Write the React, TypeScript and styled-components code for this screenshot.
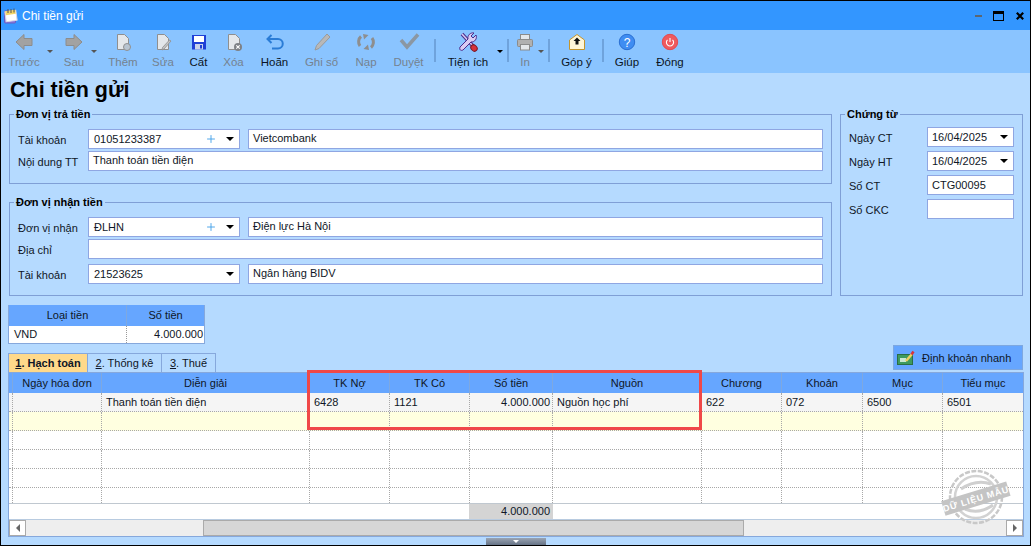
import React from "react";
import styled, { createGlobalStyle } from "styled-components";
import { Plus } from "lucide-react";

const GlobalStyle = createGlobalStyle`
  html, body {
    margin: 0;
    padding: 0;
    background: #b5daff;
  }
  * {
    box-sizing: border-box;
  }
`;

const ArrowLeftIcon = () => (
  <svg width="22" height="22" viewBox="0 0 22 22">
    <polygon points="3,11 11,3.5 11,7.5 19,7.5 19,14.5 11,14.5 11,18.5" fill="#a2a2a2" stroke="#8c8c8c" />
  </svg>
);
const ArrowRightIcon = () => (
  <svg width="22" height="22" viewBox="0 0 22 22">
    <polygon points="19,11 11,3.5 11,7.5 3,7.5 3,14.5 11,14.5 11,18.5" fill="#a2a2a2" stroke="#8c8c8c" />
  </svg>
);
const Doc = () => <path d="M5.5 3.5h7l4 4v11h-11z" fill="#e4e7ea" stroke="#8f8f8f" />;
const AddDocIcon = () => (
  <svg width="22" height="22" viewBox="0 0 22 22">
    <Doc />
    <circle cx="15" cy="16" r="3.5" fill="#b8c4d0" stroke="#8f8f8f" />
  </svg>
);
const EditDocIcon = () => (
  <svg width="22" height="22" viewBox="0 0 22 22">
    <Doc />
    <path d="M19 10l-7 8-2 1 .5-2.5 7-7.5z" fill="#c4c4c4" stroke="#8f8f8f" strokeWidth="0.8" />
  </svg>
);
const DeleteDocIcon = () => (
  <svg width="22" height="22" viewBox="0 0 22 22">
    <Doc />
    <circle cx="15" cy="16" r="4" fill="#7e8186" />
    <path d="M13.3 14.3l3.4 3.4M16.7 14.3l-3.4 3.4" stroke="#fff" strokeWidth="1.1" />
  </svg>
);
const SaveIcon = () => (
  <svg width="22" height="22" viewBox="0 0 22 22">
    <rect x="4" y="4" width="14" height="14.5" fill="#1f3fd6" />
    <rect x="6" y="5" width="10" height="6" fill="#fff" />
    <rect x="7" y="13" width="8" height="5.5" fill="#c9d3ea" />
    <rect x="12" y="14" width="2" height="3.5" fill="#1f3fd6" />
  </svg>
);
const UndoIcon = () => (
  <svg width="22" height="22" viewBox="0 0 22 22" fill="none" stroke="#2a7cd6" strokeWidth="2">
    <path d="M7.500 4L3.500 8l4 4" />
    <path d="M4 8h10a4.500 4.500 0 0 1 0 9.500H8" />
  </svg>
);
const PencilIcon = () => (
  <svg width="22" height="22" viewBox="0 0 22 22">
    <polygon points="16,3 19,6 8,17.500 4,19 5.500,14.500" fill="#b8b8b8" stroke="#9a9a9a" />
  </svg>
);
const ReloadIcon = () => (
  <svg width="22" height="22" viewBox="0 0 22 22" fill="none" stroke="#8e8e8e" strokeWidth="3">
    <path d="M5 15a7 7 0 0 1 1-9.500" />
    <path d="M17 7a7 7 0 0 1-1 9.500" />
    <polygon points="8,3 13.500,4 9,8.500" fill="#8e8e8e" stroke="none" />
    <polygon points="14,19 8.500,18 13,13.500" fill="#8e8e8e" stroke="none" />
  </svg>
);
const CheckIcon = () => (
  <svg width="22" height="22" viewBox="0 0 22 22" fill="none" stroke="#8b97a3" strokeWidth="3.500">
    <polyline points="3,9 9,16 20,3.500" />
  </svg>
);
const ToolsIcon = () => (
  <svg width="22" height="22" viewBox="0 0 22 22">
    <path d="M5 3l11 12" stroke="#4a2b8c" strokeWidth="3.500" />
    <path d="M5 3l11 12" stroke="#d9ccf2" strokeWidth="1.500" />
    <path d="M19 4l-3 3-2-2 3-3a5 5 0 0 0-6 6L3 16c-1 3 1 4 3 3l8-8a5 5 0 0 0 5-7z" fill="#d9ccf2" stroke="#4a2b8c" />
    <ellipse cx="17" cy="17" rx="3.500" ry="2.800" transform="rotate(45 17 17)" fill="#d8323a" stroke="#7a1a28" />
  </svg>
);
const PrinterIcon = () => (
  <svg width="22" height="22" viewBox="0 0 22 22" stroke="#8b8b8b">
    <rect x="6.500" y="3.500" width="9" height="5" fill="#e4e7ea" />
    <rect x="3.500" y="8.500" width="15" height="7" rx="1" fill="#b0b0b0" />
    <rect x="6.500" y="13.500" width="9" height="5.500" fill="#e4e7ea" />
  </svg>
);
const MailIcon = () => (
  <svg width="22" height="22" viewBox="0 0 22 22">
    <path d="M3.500 9L11 3.500 18.500 9v9.500h-15z" fill="#fff6d8" stroke="#c4952c" />
    <path d="M11 6.500l3.500 3.500h-2v3.500h-3V10h-2z" fill="#111" />
  </svg>
);
const HelpIcon = () => (
  <svg width="22" height="22" viewBox="0 0 22 22">
    <circle cx="11" cy="11" r="7.700" fill="#3f8df2" stroke="#2a6fd2" />
    <text x="11" y="15.500" textAnchor="middle" fontFamily="Liberation Sans" fontSize="12" fill="#fff">?</text>
  </svg>
);
const PowerIcon = () => (
  <svg width="22" height="22" viewBox="0 0 22 22">
    <circle cx="11" cy="11" r="7.700" fill="#ef5a5e" stroke="#e24a50" />
    <path d="M8.500 8.800a3.600 3.600 0 1 0 5 0M11 7v4" fill="none" stroke="#fff" strokeWidth="1.100" />
  </svg>
);

const NotepadIcon = () => (
  <svg width="16" height="16" viewBox="0 0 16 16">
    <rect x="1.500" y="3" width="11" height="12" rx="1" fill="#8f7fe0" stroke="#6a5cc0" />
    <rect x="2.500" y="3" width="11" height="10" fill="#fff" stroke="#d8d8e8" transform="rotate(-8 8 8)" />
    <rect x="3" y="2.500" width="10" height="4" fill="#f4d668" transform="rotate(-8 8 8)" />
    <path d="M5 1v4M8 1v4M11 0.500v4" stroke="#555" />
  </svg>
);

const StampIcon = () => (
  <svg width="18" height="16" viewBox="0 0 18 16">
    <rect x="0.500" y="4.500" width="15" height="10" fill="#3e9a5e" stroke="#2a6e42" />
    <rect x="3" y="8" width="6" height="4" fill="#c9e8d2" />
    <path d="M9 11l6-7" stroke="#f0d060" strokeWidth="2.500" />
    <path d="M14.500 4.500l2-3" stroke="#d8323a" strokeWidth="2.500" />
  </svg>
);

const tools = [
  { label: "Trước", w: 40, ml: 0, off: true, icon: <ArrowLeftIcon />, caret: -9 },
  { label: "Sau", w: 40, ml: 10, off: true, icon: <ArrowRightIcon />, caret: -3 },
  { label: "Thêm", w: 40, ml: 9, off: true, icon: <AddDocIcon /> },
  { label: "Sửa", w: 36, ml: 2, off: true, icon: <EditDocIcon /> },
  { label: "Cất", w: 35, ml: 0, icon: <SaveIcon /> },
  { label: "Xóa", w: 35, ml: 0, off: true, icon: <DeleteDocIcon /> },
  { label: "Hoãn", w: 47, ml: 0, icon: <UndoIcon /> },
  { label: "Ghi sổ", w: 47, ml: 0, off: true, icon: <PencilIcon /> },
  { label: "Nạp", w: 42, ml: 0, off: true, icon: <ReloadIcon /> },
  { label: "Duyệt", w: 43, ml: 0, off: true, icon: <CheckIcon /> },
  { sep: 4 },
  { label: "Tiện ích", w: 56, ml: 4, icon: <ToolsIcon />, caret: -7, dark: true },
  { sep: 11 },
  { label: "In", w: 30, ml: 1, off: true, icon: <PrinterIcon />, caret: -4 },
  { sep: 8 },
  { label: "Góp ý", w: 49, ml: 2, icon: <MailIcon /> },
  { sep: 1 },
  { label: "Giúp", w: 46, ml: 0, icon: <HelpIcon /> },
  { label: "Đóng", w: 40, ml: 0, icon: <PowerIcon /> },
];

const App = () => {
  return (
    <Window>
      <GlobalStyle />
      <TitleBar>
        <NotepadIcon />
        <TitleText>Chi tiền gửi</TitleText>
        <WinControls>
          <MinButton />
          <MaxButton />
          <CloseButton>
            <svg width="8" height="8" viewBox="0 0 8 8">
              <path d="M.8.800l6.400 6.400M7.200.800L.8 7.200" stroke="#000" strokeWidth="2.200" />
            </svg>
          </CloseButton>
        </WinControls>
      </TitleBar>

      <Toolbar>
        {tools.map((t, i) =>
          t.sep !== undefined ? (
            <ToolSep key={i} $ml={t.sep} />
          ) : (
            <ToolButton key={i} $w={t.w!} $ml={t.ml!} $off={!!t.off}>
              {t.icon}
              <ToolLabel>{t.label}</ToolLabel>
              {t.caret !== undefined && <ToolCaret $right={t.caret} $dark={!!t.dark} />}
            </ToolButton>
          )
        )}
      </Toolbar>

      <Body>
        <Heading>Chi tiền gửi</Heading>
        <FormArea>
          <LeftColumn>
            <Group>
              <GroupTitle>Đơn vị trả tiền</GroupTitle>
              <FormRow>
                <FieldLabel>Tài khoản</FieldLabel>
                <Combo value="01051233387" plus />
                <Field>Vietcombank</Field>
              </FormRow>
              <FormRow $top={2}>
                <FieldLabel>Nội dung TT</FieldLabel>
                <Field>Thanh toán tiền điện</Field>
              </FormRow>
            </Group>
            <Group $bottom={11}>
              <GroupTitle>Đơn vị nhận tiền</GroupTitle>
              <FormRow>
                <FieldLabel>Đơn vị nhận</FieldLabel>
                <Combo value="ĐLHN" plus />
                <Field>Điện lực Hà Nội</Field>
              </FormRow>
              <FormRow $top={2}>
                <FieldLabel>Địa chỉ</FieldLabel>
                <Field />
              </FormRow>
              <FormRow $top={5}>
                <FieldLabel>Tài khoản</FieldLabel>
                <Combo value="21523625" />
                <Field>Ngân hàng BIDV</Field>
              </FormRow>
            </Group>
          </LeftColumn>
          <VoucherGroup>
            <GroupTitle>Chứng từ</GroupTitle>
            <VoucherGrid>
              <VoucherLabel>Ngày CT</VoucherLabel>
              <DateCombo>
                16/04/2025
                <DownArrow />
              </DateCombo>
              <VoucherLabel>Ngày HT</VoucherLabel>
              <DateCombo>
                16/04/2025
                <DownArrow />
              </DateCombo>
              <VoucherLabel>Số CT</VoucherLabel>
              <DateCombo>CTG00095</DateCombo>
              <VoucherLabel>Số CKC</VoucherLabel>
              <DateCombo />
            </VoucherGrid>
          </VoucherGroup>
        </FormArea>

        <CurrencyTable>
          <CurrencyHead>Loại tiền</CurrencyHead>
          <CurrencyHead>Số tiền</CurrencyHead>
          <CurrencyCell>VND</CurrencyCell>
          <CurrencyCell $right>4.000.000</CurrencyCell>
        </CurrencyTable>

        <TabRow>
          <Tabs>
            <Tab $active $w={80}>
              <u>1</u>. Hạch toán
            </Tab>
            <Tab $w={75}>
              <u>2</u>. Thống kê
            </Tab>
            <Tab $w={55}>
              <u>3</u>. Thuế
            </Tab>
          </Tabs>
          <QuickButton>
            <StampIcon />
            Định khoản nhanh
          </QuickButton>
        </TabRow>

        <Grid>
          <GridRow $h={20} $head>
            <HeadCell />
            <HeadCell>Ngày hóa đơn</HeadCell>
            <HeadCell>Diễn giải</HeadCell>
            <HeadCell>TK Nợ</HeadCell>
            <HeadCell>TK Có</HeadCell>
            <HeadCell>Số tiền</HeadCell>
            <HeadCell>Nguồn</HeadCell>
            <HeadCell>Chương</HeadCell>
            <HeadCell>Khoản</HeadCell>
            <HeadCell>Mục</HeadCell>
            <HeadCell>Tiểu mục</HeadCell>
          </GridRow>
          <GridRow $h={19} $bg="#f5f5f5">
            <Cell />
            <Cell />
            <Cell>Thanh toán tiền điện</Cell>
            <Cell>6428</Cell>
            <Cell>1121</Cell>
            <Cell $right>4.000.000</Cell>
            <Cell>Nguồn học phí</Cell>
            <Cell>622</Cell>
            <Cell>072</Cell>
            <Cell>6500</Cell>
            <Cell>6501</Cell>
          </GridRow>
          <EmptyRow $bg="#ffffe0" />
          <EmptyRow />
          <EmptyRow />
          <EmptyRow />
          <EmptyRow $h={15} $open />
          <TotalRow>
            <TotalBlank />
            <TotalCell>4.000.000</TotalCell>
          </TotalRow>
          <ScrollBar>
            <ScrollButton>
              <ScrollArrow />
            </ScrollButton>
            <ScrollThumb />
            <ScrollButton $end>
              <ScrollArrow $end />
            </ScrollButton>
          </ScrollBar>
          <Highlight />
          <Watermark>
            <svg width="76" height="64" viewBox="0 0 76 64">
              <circle cx="37" cy="30" r="26" fill="none" stroke="#c8c8c8" strokeWidth="2.500" strokeDasharray="5 1.500" />
              <circle cx="37" cy="30" r="21" fill="none" stroke="#d2d2d2" strokeWidth="2.500" />
              <path d="M22 22q15-10 30-5M26 42q14 6 28-4" fill="none" stroke="#cfcfcf" strokeWidth="3" />
              <g transform="rotate(-17 37 32)">
                <rect x="3" y="24" width="68" height="15" fill="#c4c4c4" />
                <text x="37" y="35" textAnchor="middle" fontFamily="Liberation Sans" fontWeight="700" fontSize="9" letterSpacing="0.800" fill="#fff">
                  DỮ LIỆU MẪU
                </text>
              </g>
            </svg>
          </Watermark>
        </Grid>

        <HandleRow>
          <Handle>
            <HandleArrow />
          </Handle>
        </HandleRow>
      </Body>
    </Window>
  );
};

export default App;

const Combo = ({ value, plus }: { value: string; plus?: boolean }) => (
  <ComboBox>
    <ComboText>{value}</ComboText>
    {plus && <Plus size={12} color="#3f9ee8" strokeWidth={1.8} />}
    <DownArrow $gap={plus ? 9 : 0} />
  </ComboBox>
);

const EmptyRow = ({ $bg, $h = 19, $open }: { $bg?: string; $h?: number; $open?: boolean }) => (
  <GridRow $h={$h} $bg={$bg} $open={$open}>
    {Array.from({ length: 11 }).map((_, i) => (
      <Cell key={i} />
    ))}
  </GridRow>
);

const FONT = `"Liberation Sans", Arial, sans-serif`;
const COLUMNS = "4px 89px 208px 80px 80px 83px 149px 80px 81px 80px 80px";
const INK = "#0f1626";

const Window = styled.div`
  width: 1031px;
  height: 546px;
  display: flex;
  flex-direction: column;
  overflow: hidden;
  border: 1px solid #000;
  background: #b5daff;
  font-family: ${FONT};
  font-size: 11px;
  color: ${INK};
`;
const TitleBar = styled.div`
  height: 29px;
  flex: none;
  display: flex;
  align-items: center;
  padding: 0 6px 0 2px;
  background: #3396ff;
`;
const TitleText = styled.div`
  margin-left: 3px;
  color: #fff;
  font-size: 12px;
`;
const WinControls = styled.div`
  margin-left: auto;
  display: flex;
  align-items: center;
`;
const MinButton = styled.div`
  width: 7px;
  height: 2px;
  background: #5c6670;
`;
const MaxButton = styled.div`
  width: 11px;
  height: 10px;
  margin-left: 11px;
  border: 1px solid #000;
  border-top-width: 3px;
`;
const CloseButton = styled.div`
  display: flex;
  margin-left: 12px;
`;
const Toolbar = styled.div`
  height: 43px;
  flex: none;
  display: flex;
  padding-left: 3px;
  background: #8ac4ff;
`;
const ToolButton = styled.div<{ $w: number; $ml: number; $off: boolean }>`
  position: relative;
  flex: none;
  width: ${(p) => p.$w}px;
  margin-left: ${(p) => p.$ml}px;
  padding-top: 1px;
  display: flex;
  flex-direction: column;
  align-items: center;
  color: ${(p) => (p.$off ? "#75828f" : "#0c1424")};
`;
const ToolLabel = styled.div`
  margin-top: 2px;
  font-size: 11.5px;
  line-height: 14px;
  white-space: nowrap;
`;
const ToolCaret = styled.div<{ $right: number; $dark: boolean }>`
  position: absolute;
  top: 20px;
  right: ${(p) => p.$right}px;
  border-style: solid;
  border-width: 3px 3.5px 0;
  border-color: ${(p) => (p.$dark ? "#000" : "#555")} transparent transparent;
`;
const ToolSep = styled.div<{ $ml: number }>`
  flex: none;
  width: 2px;
  height: 23px;
  margin: 9px 0 0 ${(p) => p.$ml}px;
  background: #6fa3dc;
`;
const Body = styled.div`
  flex: 1;
  display: flex;
  flex-direction: column;
  padding: 4px 6px 0 7px;
`;
const Heading = styled.h1`
  margin: 0 0 4px 2px;
  font-size: 21.5px;
  line-height: 26px;
  font-weight: 700;
  color: #000;
`;
const FormArea = styled.div`
  display: grid;
  grid-template-columns: 823px 183px;
  column-gap: 8px;
  margin-left: 1px;
`;
const LeftColumn = styled.div`
  display: flex;
  flex-direction: column;
  gap: 11px;
`;
const Group = styled.fieldset<{ $bottom?: number }>`
  margin: 0;
  min-width: 0;
  padding: 8px 8px ${(p) => p.$bottom ?? 12}px;
  border: 1px solid #7f9fd6;
`;
const VoucherGroup = styled(Group)`
  padding: 6px 7px 0 8px;
`;
const GroupTitle = styled.legend`
  margin-left: -4px;
  padding: 0 2px;
  font-size: 11px;
  line-height: 14px;
  font-weight: 700;
  color: #000;
`;
const FormRow = styled.div<{ $top?: number }>`
  display: flex;
  gap: 8px;
  height: 20px;
  margin-top: ${(p) => p.$top ?? 0}px;
`;
const FieldLabel = styled.div`
  flex: none;
  width: 62px;
  padding-top: 4px;
  line-height: 14px;
  white-space: nowrap;
`;
const Field = styled.div`
  flex: 1;
  height: 20px;
  padding: 0 4px;
  line-height: 17px;
  background: #fff;
  border: 1px solid #8fa6e2;
  color: ${INK};
`;
const ComboBox = styled(Field)`
  flex: none;
  width: 152px;
  display: flex;
  align-items: center;
  padding: 0 5px 0 5px;
`;
const ComboText = styled.div`
  flex: 1;
`;
const DownArrow = styled.div<{ $gap?: number }>`
  flex: none;
  margin-left: ${(p) => p.$gap ?? 0}px;
  border-style: solid;
  border-width: 4px 4px 0;
  border-color: #000 transparent transparent;
`;
const VoucherGrid = styled.div`
  display: grid;
  grid-template-columns: 78px 87px;
  grid-auto-rows: 20px;
  row-gap: 4px;
`;
const VoucherLabel = styled.div`
  padding-top: 4px;
  line-height: 14px;
`;
const DateCombo = styled(Field)`
  display: flex;
  align-items: center;
  justify-content: space-between;
  padding: 0 5px 0 4px;
`;
const CurrencyTable = styled.div`
  margin-top: 9px;
  width: 197px;
  display: grid;
  grid-template-columns: 118px 77px;
  grid-template-rows: 21px 17px;
  border: 1px solid #86a8dc;
  border-top: 0;
  background: #fff;
`;
const CurrencyHead = styled.div`
  text-align: center;
  line-height: 21px;
  background: #66a6ff;
  color: ${INK};
  &:first-child {
    border-right: 1px solid #7ea8e0;
  }
`;
const CurrencyCell = styled.div<{ $right?: boolean }>`
  padding: 0 1px 0 5px;
  line-height: 17px;
  text-align: ${(p) => (p.$right ? "right" : "left")};
  &:nth-child(3) {
    border-right: 1px dotted #999;
  }
`;
const TabRow = styled.div`
  margin-top: 1px;
  height: 27px;
  display: flex;
  align-items: flex-start;
  justify-content: space-between;
`;
const Tabs = styled.div`
  display: flex;
  margin-top: 8px;
`;
const Tab = styled.div<{ $active?: boolean; $w: number }>`
  width: ${(p) => p.$w}px;
  height: 19px;
  line-height: 18px;
  text-align: center;
  white-space: nowrap;
  border: 1px solid #86a8dc;
  border-bottom: 0;
  margin-right: -1px;
  background: ${(p) => (p.$active ? "#ffd98a" : "transparent")};
  font-weight: ${(p) => (p.$active ? 700 : 400)};
  color: ${INK};
`;
const QuickButton = styled.div`
  width: 130px;
  height: 25px;
  margin-right: 1px;
  display: flex;
  align-items: center;
  gap: 7px;
  padding-left: 3px;
  white-space: nowrap;
  background: #66a6ff;
  border: 1px solid #7ea8e0;
  color: ${INK};
`;
const Grid = styled.div`
  position: relative;
  width: 1016px;
  height: 165px;
  flex: none;
  display: flex;
  flex-direction: column;
  border: 1px solid #86a8dc;
  background: #fff;
`;
const GridRow = styled.div<{ $h: number; $bg?: string; $head?: boolean; $open?: boolean }>`
  flex: none;
  height: ${(p) => p.$h}px;
  display: grid;
  grid-template-columns: ${COLUMNS};
  background: ${(p) => p.$bg ?? (p.$head ? "#66a6ff" : "#fff")};
  border-bottom: ${(p) => (p.$head || p.$open ? "0" : "1px dotted #a8a8a8")};
`;
const HeadCell = styled.div`
  line-height: 20px;
  text-align: center;
  white-space: nowrap;
  color: ${INK};
  border-right: 1px solid #7ea8e0;
  &:last-child {
    border-right: 0;
  }
`;
const Cell = styled.div<{ $right?: boolean }>`
  padding: 0 ${(p) => (p.$right ? 2 : 4)}px 0 4px;
  line-height: 18px;
  white-space: nowrap;
  text-align: ${(p) => (p.$right ? "right" : "left")};
  border-right: 1px dotted #a8a8a8;
  color: ${INK};
  &:first-child {
    padding: 0;
  }
  &:last-child {
    border-right: 0;
  }
`;
const TotalRow = styled.div`
  flex: none;
  height: 16px;
  display: flex;
  border-top: 1px solid #c0c8d0;
`;
const TotalBlank = styled.div`
  width: 460px;
`;
const TotalCell = styled.div`
  width: 84px;
  padding-right: 3px;
  line-height: 15px;
  text-align: right;
  background: #d4d4d4;
`;
const ScrollBar = styled.div`
  flex: 1;
  display: flex;
  align-items: stretch;
  background: #eeeeee;
  border-top: 1px solid #b8cbe0;
`;
const ScrollButton = styled.div<{ $end?: boolean }>`
  width: 17px;
  margin-left: ${(p) => (p.$end ? "auto" : "0")};
  display: flex;
  align-items: center;
  justify-content: center;
  background: #fff;
  border: 1px solid #aaa;
`;
const ScrollArrow = styled.div<{ $end?: boolean }>`
  border-style: solid;
  border-width: ${(p) => (p.$end ? "4px 0 4px 4px" : "4px 4px 4px 0")};
  border-color: transparent #666;
`;
const ScrollThumb = styled.div`
  width: 541px;
  margin-left: 177px;
  background: #d6d6d6;
  border: 1px solid #aaa;
`;
const Highlight = styled.div`
  position: absolute;
  top: -3px;
  left: 298px;
  width: 395px;
  height: 60px;
  border: 3px solid #f04848;
  pointer-events: none;
`;
const Watermark = styled.div`
  position: absolute;
  top: 94px;
  right: 8px;
  display: flex;
  pointer-events: none;
`;
const HandleRow = styled.div`
  display: flex;
  justify-content: center;
  padding-top: 1px;
`;
const Handle = styled.div`
  width: 60px;
  height: 8px;
  display: flex;
  justify-content: center;
  padding-top: 2px;
  background: linear-gradient(#9aa4b2, #5e6c80);
`;
const HandleArrow = styled.div`
  border-style: solid;
  border-width: 3px 3.5px 0;
  border-color: #fff transparent transparent;
`;
